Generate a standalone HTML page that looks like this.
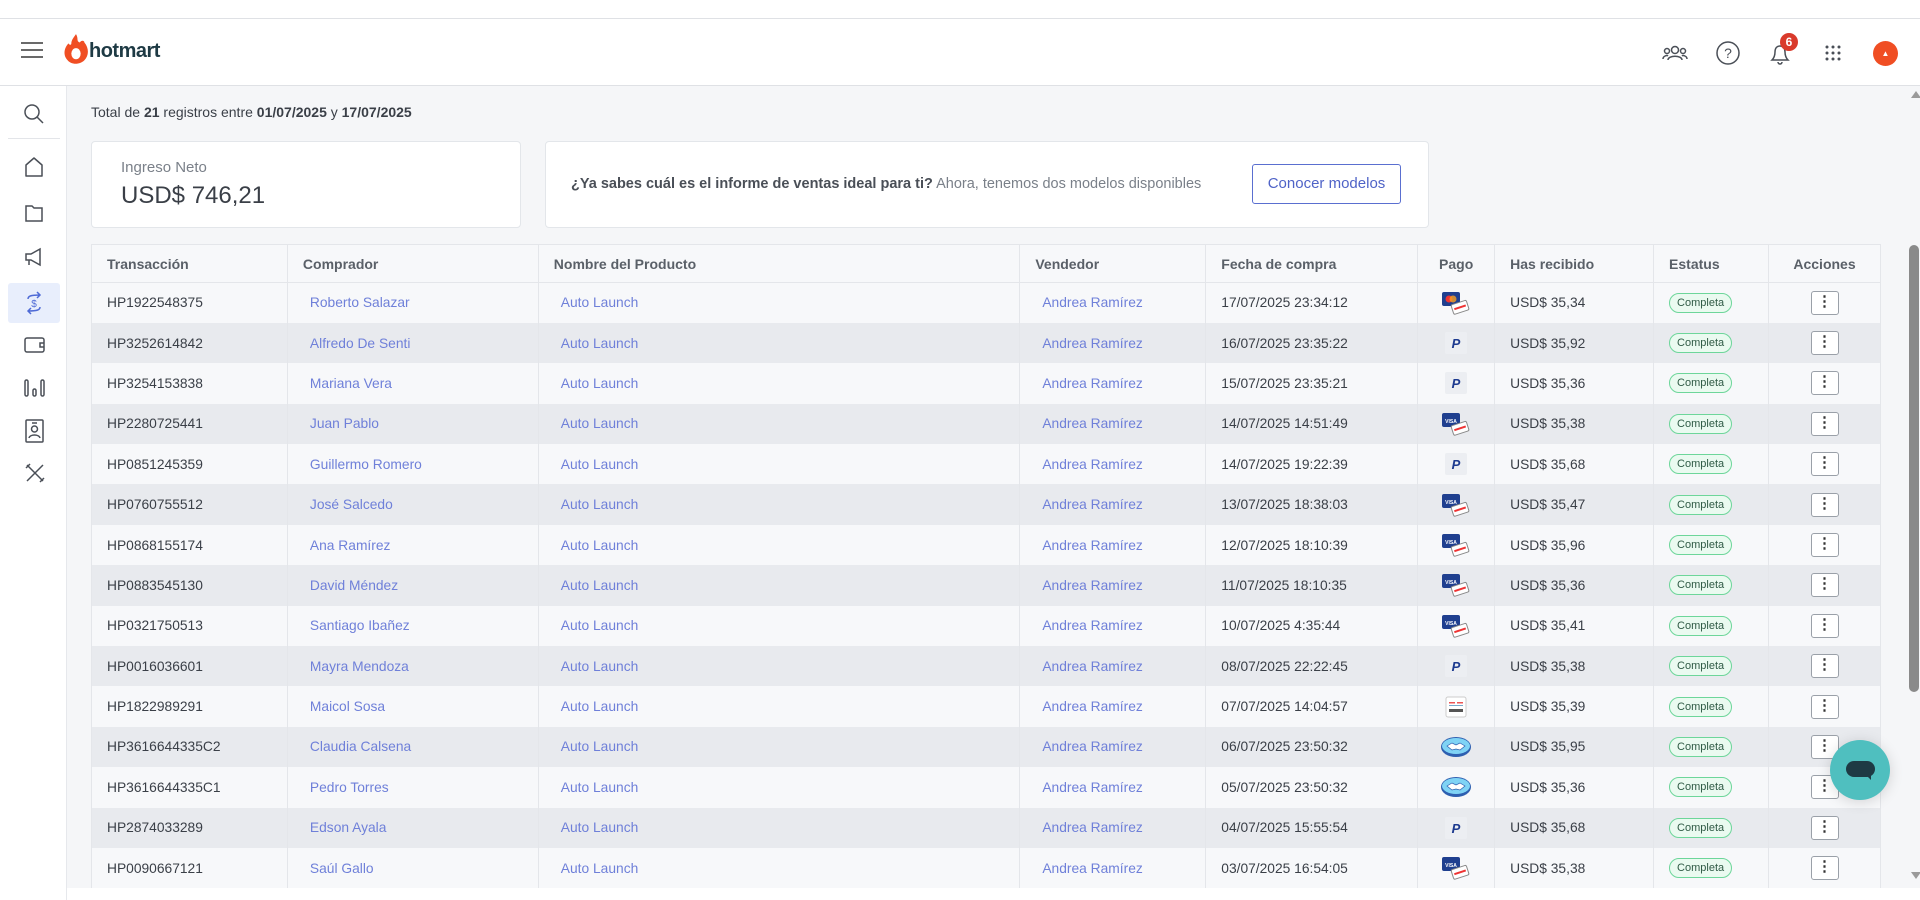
<!DOCTYPE html>
<html><head><meta charset="utf-8"><style>
*{box-sizing:border-box;margin:0;padding:0}
body{width:1920px;height:900px;overflow:hidden;background:#fff;font-family:"Liberation Sans",sans-serif;color:#3a3f47;position:relative}
.top{position:absolute;left:0;top:18px;width:1920px;height:68px;border-top:1px solid #dfe1e5;border-bottom:1px solid #dfe1e5;background:#fff}
.side{position:absolute;left:0;top:86px;width:67px;height:814px;background:#fff;border-right:1px solid #e6e8ec}
.main{position:absolute;left:67px;top:86px;width:1841px;height:802px;background:#f5f6f8}
.sb{position:absolute;left:1908px;top:86px;width:12px;height:802px;background:#f5f6f8}
.card{position:absolute;background:#fff;border:1px solid #e3e6ea;border-radius:4px}
table{position:absolute;left:91px;top:244px;width:1790px;border-collapse:collapse;font-size:13.8px}
th{height:38px;text-align:left;font-weight:bold;color:#5a6068;background:#f7f8fa;border:1px solid #e4e6ea;padding-left:15px;font-size:14px}
td{height:40.4px;border-left:1px solid #e4e6ea;border-right:1px solid #e4e6ea;padding-left:15px;white-space:nowrap}
tr:nth-child(odd) td{background:#f7f8fa}
tr:nth-child(even) td{background:#e8eaee}
td.l{color:#6f80d9;padding-left:22px}
.pill{display:inline-block;border:1.5px solid #6dd69a;background:#eafaf0;color:#2f5a45;border-radius:12px;font-size:11px;padding:3px 7px}
.dots{display:inline-block;width:28px;height:24px;border:1px solid #9aa0a8;border-radius:3px;background:#fff;text-align:center;line-height:20px;font-weight:bold;font-size:15px;color:#333}
.ic{stroke:#4a4f57;fill:none;stroke-width:1.5}
</style></head><body>
<div class="top">
 <svg style="position:absolute;left:20px;top:22px" width="24" height="18"><path d="M1 2h22M1 9h22M1 16h22" stroke="#555" stroke-width="1.8"/></svg>
 <svg style="position:absolute;left:62px;top:13px" width="28" height="34" viewBox="0 0 30 36"><path d="M15 2c3 5 0 7 4 9 2-3 5-2 5 0 5 6 5 14 0 19-5 5-14 5-18 0-5-5-4-13 1-18 1 2 3 2 3 0 0-4 3-7 5-10z" fill="#f04e23"/><ellipse cx="15" cy="23" rx="5" ry="6" fill="#fff"/></svg>
 <div style="position:absolute;left:89px;top:21px;font-size:20px;font-weight:bold;color:#1e3a44;letter-spacing:-0.5px">hotmart</div>
 <svg style="position:absolute;left:1662px;top:25px" width="26" height="18"><circle cx="13" cy="6" r="3.5" class="ic"/><circle cx="5" cy="7" r="2.5" class="ic"/><circle cx="21" cy="7" r="2.5" class="ic"/><path d="M6 16c0-5 14-5 14 0M1 15c0-3 4-4 5-3M25 15c0-3-4-4-5-3" class="ic"/></svg>
 <svg style="position:absolute;left:1715px;top:21px" width="26" height="26"><circle cx="13" cy="13" r="11" class="ic"/><text x="13" y="18" font-size="14" text-anchor="middle" fill="#4a4f57" font-family="Liberation Sans">?</text></svg>
 <svg style="position:absolute;left:1768px;top:22px" width="24" height="26"><path d="M4 19h16c-2-2-3-4-3-8 0-4-2-6-5-6s-5 2-5 6c0 4-1 6-3 8zM10 21a2 2 0 0 0 4 0" class="ic"/></svg>
 <div style="position:absolute;left:1780px;top:14px;width:18px;height:18px;border-radius:9px;background:#d93a2b;color:#fff;font-size:12px;font-weight:bold;text-align:center;line-height:18px">6</div>
 <svg style="position:absolute;left:1824px;top:25px" width="18" height="18"><g fill="#4a4f57"><circle cx="3" cy="3" r="1.5"/><circle cx="9" cy="3" r="1.5"/><circle cx="15" cy="3" r="1.5"/><circle cx="3" cy="9" r="1.5"/><circle cx="9" cy="9" r="1.5"/><circle cx="15" cy="9" r="1.5"/><circle cx="3" cy="15" r="1.5"/><circle cx="9" cy="15" r="1.5"/><circle cx="15" cy="15" r="1.5"/></g></svg>
 <div style="position:absolute;left:1873px;top:22px;width:25px;height:25px;border-radius:13px;background:#f04e23;color:#fff;font-size:8px;text-align:center;line-height:25px">▲</div>
</div>
<div class="side">
 <svg style="position:absolute;left:23px;top:17px" width="22" height="22"><circle cx="9" cy="9" r="7" class="ic"/><path d="M14 14l6 6" class="ic"/></svg>
 <div style="position:absolute;left:8px;top:52px;width:52px;border-top:1px solid #e3e5e9"></div>
 <svg style="position:absolute;left:24px;top:70px" width="20" height="22"><path d="M2 9l8-7 8 7v11H2z" class="ic" stroke-linejoin="round"/></svg>
 <svg style="position:absolute;left:24px;top:117px" width="20" height="20"><path d="M2 3h6l2 2h8v13H2z" class="ic"/></svg>
 <svg style="position:absolute;left:23px;top:160px" width="22" height="22"><path d="M3 8h5l9-5v16l-9-5H3zM6 14v5" class="ic"/></svg>
 <div style="position:absolute;left:8px;top:197px;width:52px;height:40px;background:#e8eefc;border-radius:3px"></div>
 <svg style="position:absolute;left:24px;top:205px" width="20" height="24"><path d="M4 8c0-3 3-4 12-4M13 1l3 3-3 3M16 16c0 3-3 4-12 4M7 23l-3-3 3-3" stroke="#4f6bd6" stroke-width="1.5" fill="none"/><text x="10" y="16" font-size="10" text-anchor="middle" fill="#4f6bd6" font-family="Liberation Sans">$</text></svg>
 <svg style="position:absolute;left:24px;top:250px" width="22" height="18"><rect x="1" y="2" width="19" height="14" rx="2" class="ic"/><path d="M20 7h-4v4h4" class="ic"/></svg>
 <svg style="position:absolute;left:24px;top:292px" width="22" height="20"><rect x="1" y="2" width="3" height="16" rx="1.5" class="ic"/><rect x="9" y="11" width="3" height="7" rx="1.5" class="ic"/><rect x="17" y="2" width="3" height="16" rx="1.5" class="ic"/></svg>
 <svg style="position:absolute;left:25px;top:333px" width="20" height="24"><rect x="1" y="1" width="17" height="22" rx="1" class="ic"/><circle cx="9.5" cy="10" r="3" class="ic"/><path d="M4 19c1-4 10-4 11 0M7 4h5" class="ic"/></svg>
 <svg style="position:absolute;left:24px;top:376px" width="22" height="22"><path d="M3 3l16 16M19 3L3 19M2 6l4-4M16 20l4-4" class="ic"/></svg>
</div>
<div class="main"></div>
<div class="sb"><div style="position:absolute;left:3px;top:5px;width:0;height:0;border-left:5px solid transparent;border-right:5px solid transparent;border-bottom:7px solid #9a9a9a"></div><div style="position:absolute;left:1px;top:159px;width:10px;height:447px;background:#8a8a8a;border-radius:5px"></div><div style="position:absolute;left:3px;top:786px;width:0;height:0;border-left:5px solid transparent;border-right:5px solid transparent;border-top:7px solid #9a9a9a"></div></div>
<div style="position:absolute;left:91px;top:104px;font-size:14px;color:#3a3f47">Total de <b>21</b> registros entre <b>01/07/2025</b> y <b>17/07/2025</b></div>
<div class="card" style="left:91px;top:141px;width:430px;height:87px">
 <div style="position:absolute;left:29px;top:17px;font-size:15px;color:#7a8089">Ingreso Neto</div>
 <div style="position:absolute;left:29px;top:40px;font-size:24px;color:#3a3f47">USD$ 746,21</div>
</div>
<div class="card" style="left:545px;top:141px;width:884px;height:87px">
 <div style="position:absolute;left:25px;top:34px;font-size:14.5px;color:#7a8089"><b style="color:#4a4f57">¿Ya sabes cuál es el informe de ventas ideal para ti?</b> Ahora, tenemos dos modelos disponibles</div>
 <div style="position:absolute;left:706px;top:22px;width:149px;height:40px;border:1px solid #5a6fd0;border-radius:3px;color:#4f63c7;font-size:15px;text-align:center;line-height:38px">Conocer modelos</div>
</div>
<table>
<colgroup><col style="width:196px"><col style="width:251px"><col style="width:482px"><col style="width:186px"><col style="width:212px"><col style="width:77px"><col style="width:159px"><col style="width:115px"><col style="width:112px"></colgroup>
<tr><th>Transacción</th><th>Comprador</th><th>Nombre del Producto</th><th>Vendedor</th><th>Fecha de compra</th><th style="padding:0;text-align:center">Pago</th><th>Has recibido</th><th>Estatus</th><th style="padding:0;text-align:center">Acciones</th></tr>
</table>
<script>
var rows=[["HP1922548375","Roberto Salazar","17/07/2025 23:34:12","mc","35,34"],["HP3252614842","Alfredo De Senti","16/07/2025 23:35:22","pp","35,92"],["HP3254153838","Mariana Vera","15/07/2025 23:35:21","pp","35,36"],["HP2280725441","Juan Pablo","14/07/2025 14:51:49","visa","35,38"],["HP0851245359","Guillermo Romero","14/07/2025 19:22:39","pp","35,68"],["HP0760755512","José Salcedo","13/07/2025 18:38:03","visa","35,47"],["HP0868155174","Ana Ramírez","12/07/2025 18:10:39","visa","35,96"],["HP0883545130","David Méndez","11/07/2025 18:10:35","visa","35,36"],["HP0321750513","Santiago Ibañez","10/07/2025 4:35:44","visa","35,41"],["HP0016036601","Mayra Mendoza","08/07/2025 22:22:45","pp","35,38"],["HP1822989291","Maicol Sosa","07/07/2025 14:04:57","bol","35,39"],["HP3616644335C2","Claudia Calsena","06/07/2025 23:50:32","ml","35,95"],["HP3616644335C1","Pedro Torres","05/07/2025 23:50:32","ml","35,36"],["HP2874033289","Edson Ayala","04/07/2025 15:55:54","pp","35,68"],["HP0090667121","Saúl Gallo","03/07/2025 16:54:05","visa","35,38"]];
var ic={
mc:'<svg width="30" height="26"><rect x="1" y="2" width="18" height="14" rx="2" fill="#1f3f8f"/><circle cx="8" cy="9" r="3.5" fill="#e33"/><circle cx="12" cy="9" r="3.5" fill="#f9a020" opacity=".8"/><g transform="rotate(-18 20 17)"><rect x="11" y="12" width="16" height="10" rx="1.5" fill="#fff" stroke="#888"/><rect x="13" y="16" width="12" height="2" fill="#e33"/></g></svg>',
visa:'<svg width="30" height="26"><rect x="1" y="2" width="18" height="14" rx="2" fill="#1f3f8f"/><text x="10" y="12" font-size="5" fill="#fff" text-anchor="middle" font-family="Liberation Sans" font-weight="bold">VISA</text><g transform="rotate(-18 20 17)"><rect x="11" y="12" width="16" height="10" rx="1.5" fill="#fff" stroke="#888"/><rect x="13" y="16" width="12" height="2" fill="#e33"/></g></svg>',
pp:'<svg width="24" height="24"><rect x="1" y="1" width="22" height="22" rx="2" fill="#eceef2"/><text x="12" y="17" font-size="13" font-weight="bold" font-style="italic" fill="#1d3a8f" text-anchor="middle" font-family="Liberation Sans">P</text></svg>',
bol:'<svg width="24" height="24"><rect x="2" y="2" width="20" height="20" rx="2" fill="#fff" stroke="#ccc"/><rect x="5" y="7" width="6" height="1.5" fill="#e55"/><rect x="13" y="7" width="6" height="1.5" fill="#e55"/><rect x="5" y="10" width="14" height="1" fill="#7ac"/><rect x="5" y="14" width="14" height="3" fill="#555"/></svg>',
ml:'<svg width="32" height="24"><ellipse cx="16" cy="12" rx="15" ry="10" fill="#2d5fb0"/><ellipse cx="16" cy="11" rx="14" ry="8" fill="#7fd3f5"/><path d="M7 11l5-3 4 2 4-2 5 3-5 4-4-1-4 1z" fill="#fff" stroke="#2d5fb0" stroke-width=".7"/></svg>'};
var h="";
rows.forEach(function(r){h+='<tr><td>'+r[0]+'</td><td class="l">'+r[1]+'</td><td class="l">Auto Launch</td><td class="l">Andrea Ramírez</td><td>'+r[2]+'</td><td style="padding:0;text-align:center;vertical-align:middle;line-height:0">'+ic[r[3]]+'</td><td>USD$ '+r[4]+'</td><td><span class="pill">Completa</span></td><td style="padding:0;text-align:center"><span class="dots">⋮</span></td></tr>';});
document.querySelector("table").insertAdjacentHTML("beforeend",h);
</script>
<div style="position:absolute;left:1830px;top:740px;width:60px;height:60px;border-radius:30px;background:#4fbfbf;box-shadow:0 2px 14px rgba(0,0,0,.15)">
 <div style="position:absolute;left:16px;top:21px;width:29px;height:16px;border-radius:8px;background:#1e3a44"></div>
 <div style="position:absolute;left:36px;top:35px;width:0;height:0;border-left:5px solid transparent;border-top:5px solid #1e3a44"></div>
</div>
</body></html>
